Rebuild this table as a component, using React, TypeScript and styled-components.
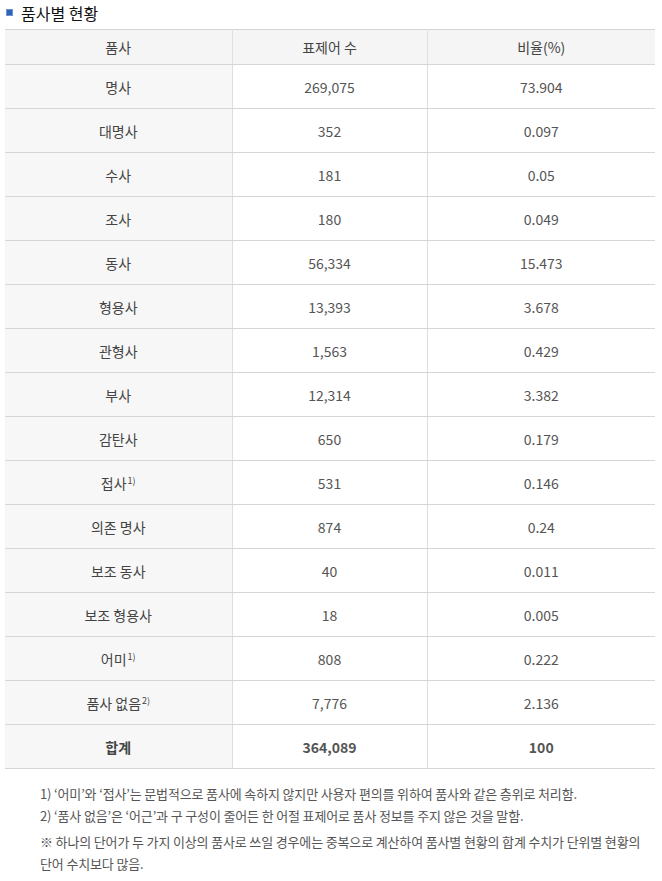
import React from 'react'
import styled, { createGlobalStyle } from 'styled-components'

const GlobalStyle = createGlobalStyle`
  body {
    margin: 0;
    background: #fff;
    font-family: 'Noto Sans CJK KR', 'Noto Sans', sans-serif;
  }
`

type Row = { name: string; note?: string; count: string; ratio: string }

const rows: Row[] = [
  { name: '명사', count: '269,075', ratio: '73.904' },
  { name: '대명사', count: '352', ratio: '0.097' },
  { name: '수사', count: '181', ratio: '0.05' },
  { name: '조사', count: '180', ratio: '0.049' },
  { name: '동사', count: '56,334', ratio: '15.473' },
  { name: '형용사', count: '13,393', ratio: '3.678' },
  { name: '관형사', count: '1,563', ratio: '0.429' },
  { name: '부사', count: '12,314', ratio: '3.382' },
  { name: '감탄사', count: '650', ratio: '0.179' },
  { name: '접사', note: '1)', count: '531', ratio: '0.146' },
  { name: '의존 명사', count: '874', ratio: '0.24' },
  { name: '보조 동사', count: '40', ratio: '0.011' },
  { name: '보조 형용사', count: '18', ratio: '0.005' },
  { name: '어미', note: '1)', count: '808', ratio: '0.222' },
  { name: '품사 없음', note: '2)', count: '7,776', ratio: '2.136' },
]

const Page = styled.div`
  padding: 0 7px 0 5px;
  width: 662px;
  box-sizing: border-box;
`

const Title = styled.h3`
  display: flex;
  align-items: center;
  gap: 8px;
  margin: 0;
  height: 29px;
  padding-left: 1px;
  padding-bottom: 4px;
  box-sizing: border-box;
  font-size: 16px;
  line-height: 20px;
  font-weight: 400;
  color: #111;
`

const Bullet = styled.span`
  width: 5px;
  height: 5px;
  background: #2f62b8;
  border: 1px solid #6f93cf;
`

const Table = styled.table`
  width: 650px;
  border-collapse: collapse;
  table-layout: fixed;
  border-top: 1px solid #d4d4d4;
  font-size: 14px;
  line-height: 20px;
  color: #555;
`

const Th = styled.th`
  height: 34px;
  padding: 0;
  background: #f5f5f5;
  font-weight: 400;
  color: #444;
  border-bottom: 1px solid #d6d6d6;
  border-left: 1px solid #e0e0e0;
  &:first-child {
    border-left: none;
  }
`

const Td = styled.td<{ $head?: boolean; $bold?: boolean }>`
  height: 43px;
  padding: 0;
  text-align: center;
  border-bottom: 1px solid #d6d6d6;
  border-left: 1px solid #dedede;
  background: ${({ $head }) => ($head ? '#f7f7f7' : '#fff')};
  color: ${({ $head }) => ($head ? '#444' : '#555')};
  font-weight: ${({ $bold }) => ($bold ? 700 : 400)};
  &:first-child {
    border-left: none;
  }
`

const Sup = styled.sup`
  font-size: 9px;
  vertical-align: 5px;
  margin-left: 1px;
  line-height: 0;
`

const Notes = styled.ul`
  list-style: none;
  margin: 14px 0 0;
  padding: 0 0 0 35px;
  font-size: 13px;
  line-height: 22px;
  letter-spacing: -0.15px;
  color: #555;
  word-break: keep-all;
`

const Note = styled.li<{ $gap?: boolean }>`
  margin-top: ${({ $gap }) => ($gap ? '4px' : '0')};
`

export default function App() {
  return (
    <Page>
      <GlobalStyle />
      <Title>
        <Bullet />
        품사별 현황
      </Title>
      <Table>
        <colgroup>
          <col style={{ width: 227 }} />
          <col style={{ width: 195 }} />
          <col />
        </colgroup>
        <thead>
          <tr>
            <Th>품사</Th>
            <Th>표제어 수</Th>
            <Th>비율(%)</Th>
          </tr>
        </thead>
        <tbody>
          {rows.map((r) => (
            <tr key={r.name}>
              <Td $head>
                {r.name}
                {r.note && <Sup>{r.note}</Sup>}
              </Td>
              <Td>{r.count}</Td>
              <Td>{r.ratio}</Td>
            </tr>
          ))}
          <tr>
            <Td $head $bold>
              합계
            </Td>
            <Td $bold>364,089</Td>
            <Td $bold>100</Td>
          </tr>
        </tbody>
      </Table>
      <Notes>
        <Note>1) ‘어미’와 ‘접사’는 문법적으로 품사에 속하지 않지만 사용자 편의를 위하여 품사와 같은 층위로 처리함.</Note>
        <Note>2) ‘품사 없음’은 ‘어근’과 구 구성이 줄어든 한 어절 표제어로 품사 정보를 주지 않은 것을 말함.</Note>
        <Note $gap>
          ※ 하나의 단어가 두 가지 이상의 품사로 쓰일 경우에는 중복으로 계산하여 품사별 현황의 합계 수치가 단위별 현황의 단어 수치보다 많음.
        </Note>
      </Notes>
    </Page>
  )
}
